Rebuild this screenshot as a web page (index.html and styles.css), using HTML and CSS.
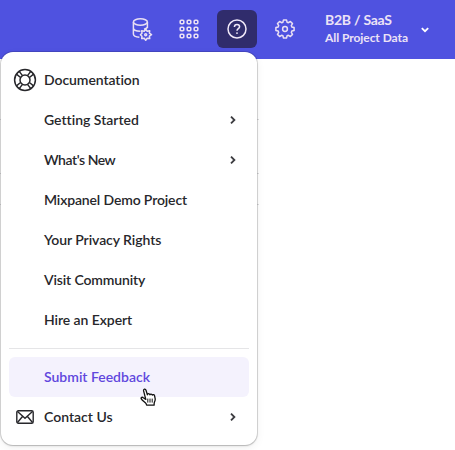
FILE: index.html
```html
<!DOCTYPE html>
<html lang="en">
<head>
<meta charset="utf-8">
<title>Help menu</title>
<link rel="stylesheet" href="styles.css">
</head>
<body>
<header class="topbar">
  <nav class="tools">
    <button class="tool" aria-label="Data management">
      <svg class="database" width="22" height="24" viewBox="0 0 22 24" fill="none" stroke="#e9dff3" stroke-width="1.5">
        <ellipse cx="9.4" cy="5" rx="7" ry="3.2"/>
        <path d="M2.400 5v12c0 1.700 2.600 3 6 3.300M16.400 5v6.200M2.400 11c0 1.800 3 3.200 7 3.200M16.400 10.300c-.8 1-1.800 1.600-3.400 2"/>
        <path d="M14.700 12.200l1.500 2 2.500-.4-.3 2.400 2.100 1.500-2.100 1.500.3 2.400-2.500-.3-1.500 2-1.500-2-2.500.3.3-2.400-1.600-1.500 1.600-1.500-.3-2.400 2.500.4z" stroke-linejoin="round"/>
        <circle cx="14.700" cy="17.700" r="1"/>
      </svg>
    </button>
    <button class="tool" aria-label="Applications">
      <svg width="20" height="20" viewBox="0 0 20 20" fill="none" stroke="#e9dff3" stroke-width="1.6">
        <rect x="1.2" y="1.2" width="3.6" height="3.6" rx="1"/><rect x="8.2" y="1.2" width="3.6" height="3.6" rx="1"/><rect x="15.2" y="1.2" width="3.6" height="3.6" rx="1"/>
        <rect x="1.2" y="8.2" width="3.6" height="3.6" rx="1"/><rect x="8.2" y="8.2" width="3.6" height="3.6" rx="1"/><rect x="15.2" y="8.2" width="3.6" height="3.6" rx="1"/>
        <rect x="1.2" y="15.2" width="3.6" height="3.6" rx="1"/><rect x="8.2" y="15.2" width="3.6" height="3.6" rx="1"/><rect x="15.2" y="15.2" width="3.6" height="3.6" rx="1"/>
      </svg>
    </button>
    <button class="tool active" aria-label="Help">
      <svg width="20" height="20" viewBox="0 0 20 20" fill="none" stroke="#f0e8f8" stroke-width="1.5">
        <circle cx="10" cy="10" r="9"/>
        <path d="M7.4 8c0-1.6 1.1-2.600 2.600-2.600s2.600 1 2.600 2.300c0 1.900-2.600 2-2.600 4.100"/>
        <circle cx="10" cy="14.100" r=".95" fill="#f0e8f8" stroke="none"/>
      </svg>
    </button>
    <button class="tool" aria-label="Settings">
      <svg width="20" height="20" viewBox="-10 -10 20 20" fill="none" stroke="#e9dff3" stroke-width="1.5" stroke-linejoin="round">
        <path d="M-1.500-9.100h3L2.100-6.800 3.400-6.300 5.400-7.500 7.500-5.400 6.300-3.400 6.800-2.100 9.100-1.500v3L6.800 2.100 6.300 3.400 7.500 5.400 5.400 7.500 3.400 6.300 2.100 6.800 1.500 9.100h-3L-2.100 6.800-3.400 6.300-5.400 7.500-7.500 5.400-6.300 3.400-6.800 2.100-9.100 1.500v-3L-6.800-2.100-6.300-3.400-7.500-5.400-5.400-7.500-3.400-6.300-2.100-6.800z"/>
        <circle r="2.400"/>
      </svg>
    </button>
  </nav>
  <div class="project">
    <div>
      <div class="project-name">B2B / SaaS</div>
      <div class="project-view">All Project Data</div>
    </div>
    <svg class="caret" width="8" height="6" viewBox="0 0 8 6" fill="none" stroke="#fff" stroke-width="1.8"><path d="M.8 1.2L4 4.200l3.200-3"/></svg>
  </div>
</header>
<main class="page">
  <div class="line first"></div>
  <div class="line second"></div>
  <div class="line third"></div>
</main>
<div class="menu">
  <a class="item"><span class="icon">
    <svg width="24" height="24" viewBox="-12 -12 24 24" fill="none" stroke="#27272b" stroke-width="1.5">
      <circle r="10.400"/><circle r="5"/>
      <path d="M-8.600-5.800L-4.400-2.500M-5.800-8.600L-2.500-4.400M8.600-5.800L4.400-2.500M5.800-8.600L2.500-4.400M-8.600 5.800L-4.400 2.500M-5.800 8.600L-2.500 4.400M8.600 5.800L4.400 2.500M5.800 8.600L2.500 4.400"/>
    </svg></span><span class="label snug">Documentation</span></a>
  <a class="item"><span class="icon"></span><span class="label plain">Getting Started</span><svg class="chevron" width="6" height="8" viewBox="0 0 6 8"><path d="M1 .6L4.400 4 1 7.400"/></svg></a>
  <a class="item"><span class="icon"></span><span class="label tightest">What's New</span><svg class="chevron" width="6" height="8" viewBox="0 0 6 8"><path d="M1 .6L4.400 4 1 7.400"/></svg></a>
  <a class="item"><span class="icon"></span><span class="label tight">Mixpanel Demo Project</span></a>
  <a class="item"><span class="icon"></span><span class="label snug">Your Privacy Rights</span></a>
  <a class="item"><span class="icon"></span><span class="label tight">Visit Community</span></a>
  <a class="item"><span class="icon"></span><span class="label snug">Hire an Expert</span></a>
  <div class="divider"></div>
  <a class="item selected"><span class="icon"></span><span class="label plain">Submit Feedback</span></a>
  <a class="item"><span class="icon">
    <svg width="18" height="14" viewBox="0 0 18 14" fill="none" stroke="#27272b" stroke-width="1.4">
      <rect x=".8" y=".7" width="16.400" height="12.600" rx="1.500"/>
      <path d="M1.500 1.500L9 8.300l7.500-6.800M1.500 12.500L6.700 6.300M16.500 12.500l-5.200-6.200"/>
    </svg></span><span class="label plain">Contact Us</span><svg class="chevron" width="6" height="8" viewBox="0 0 6 8"><path d="M1 .6L4.400 4 1 7.400"/></svg></a>
</div>
<svg class="cursor" width="17" height="19" viewBox="0 0 17 19" fill="#fff" stroke="#111" stroke-width="1.3" stroke-linejoin="round" stroke-linecap="round">
  <path d="M5.800 11.400L3.600 2.900C3.300 1 5.400.4 6 2.200l1.400 4.600c.1-1.400 2-1.500 2.500 0 .4-1.100 2-1 2.400.3.700-.9 2-.6 2.300.7l.6 3.100c.2 1.700-.8 2.800-1 4.200l-.1 2H6.600l-.5-1.500C4.700 14 2.600 13 1.300 10.900c-.7-1.500 1-2.100 2-1.200z"/>
  <path d="M7.800 11v3.200M10 11v3.200M12.200 11v3.200" stroke-width="1"/>
</svg>
</body>
</html>
```
FILE: styles.css
```css
* { box-sizing: border-box; }
body {
  margin: 0;
  width: 455px;
  height: 450px;
  overflow: hidden;
  background: #fff;
  color: #27272b;
  font-family: Lato, "Liberation Sans", sans-serif;
  font-variant-ligatures: none;
}
.topbar {
  height: 59px;
  background: #4f52e0;
  display: flex;
  padding: 10px 0 0 121px;
}
.tools { display: flex; gap: 8px; }
.tool {
  width: 40px;
  height: 38px;
  padding: 0;
  border: 0;
  border-radius: 6px;
  background: none;
  display: flex;
  align-items: center;
  justify-content: center;
}
.tool.active { background: #302c6c; }
.database { margin-left: 2px; }
.project {
  display: flex;
  margin-left: 20px;
  color: #ece2f6;
  white-space: nowrap;
}
.project-name { width: 96px; font-size: 14px; line-height: 20px; font-weight: 700; letter-spacing: -.25px; }
.project-view { font-size: 12px; line-height: 16px; font-weight: 700; letter-spacing: -.06px; }
.caret { margin-top: 17px; }
.page { padding-top: 60px; }
.line { height: 1px; width: 259px; background: #dedee0; }
.line.second { margin-top: 53px; }
.line.third { margin-top: 30px; }
.menu {
  position: absolute;
  left: 1px;
  top: 52px;
  width: 256px;
  height: 393px;
  padding: 8px;
  border-radius: 12px;
  background: #fff;
  box-shadow: 0 0 0 1px rgba(0,0,0,.13), 0 1px 2px rgba(0,0,0,.16), 0 3px 10px rgba(0,0,0,.06);
}
.item {
  height: 40px;
  padding-right: 13px;
  border-radius: 6px;
  display: flex;
  align-items: center;
  font-size: 14px;
  font-weight: 600;
}
.icon { width: 32px; margin-right: 3px; display: flex; justify-content: center; }
.label { white-space: nowrap; padding-bottom: 2px; }
.snug { letter-spacing: -.07px; }
.tight { letter-spacing: -.14px; }
.tightest { letter-spacing: -.45px; }
.chevron { margin-left: auto; fill: none; stroke: #3c3c40; stroke-width: 1.8; }
.divider { height: 1px; margin: 8px 0; background: #e5e5e7; }
.selected { background: #f4f2fd; color: #6047dd; }
.cursor { position: absolute; left: 140px; top: 388px; }
```
